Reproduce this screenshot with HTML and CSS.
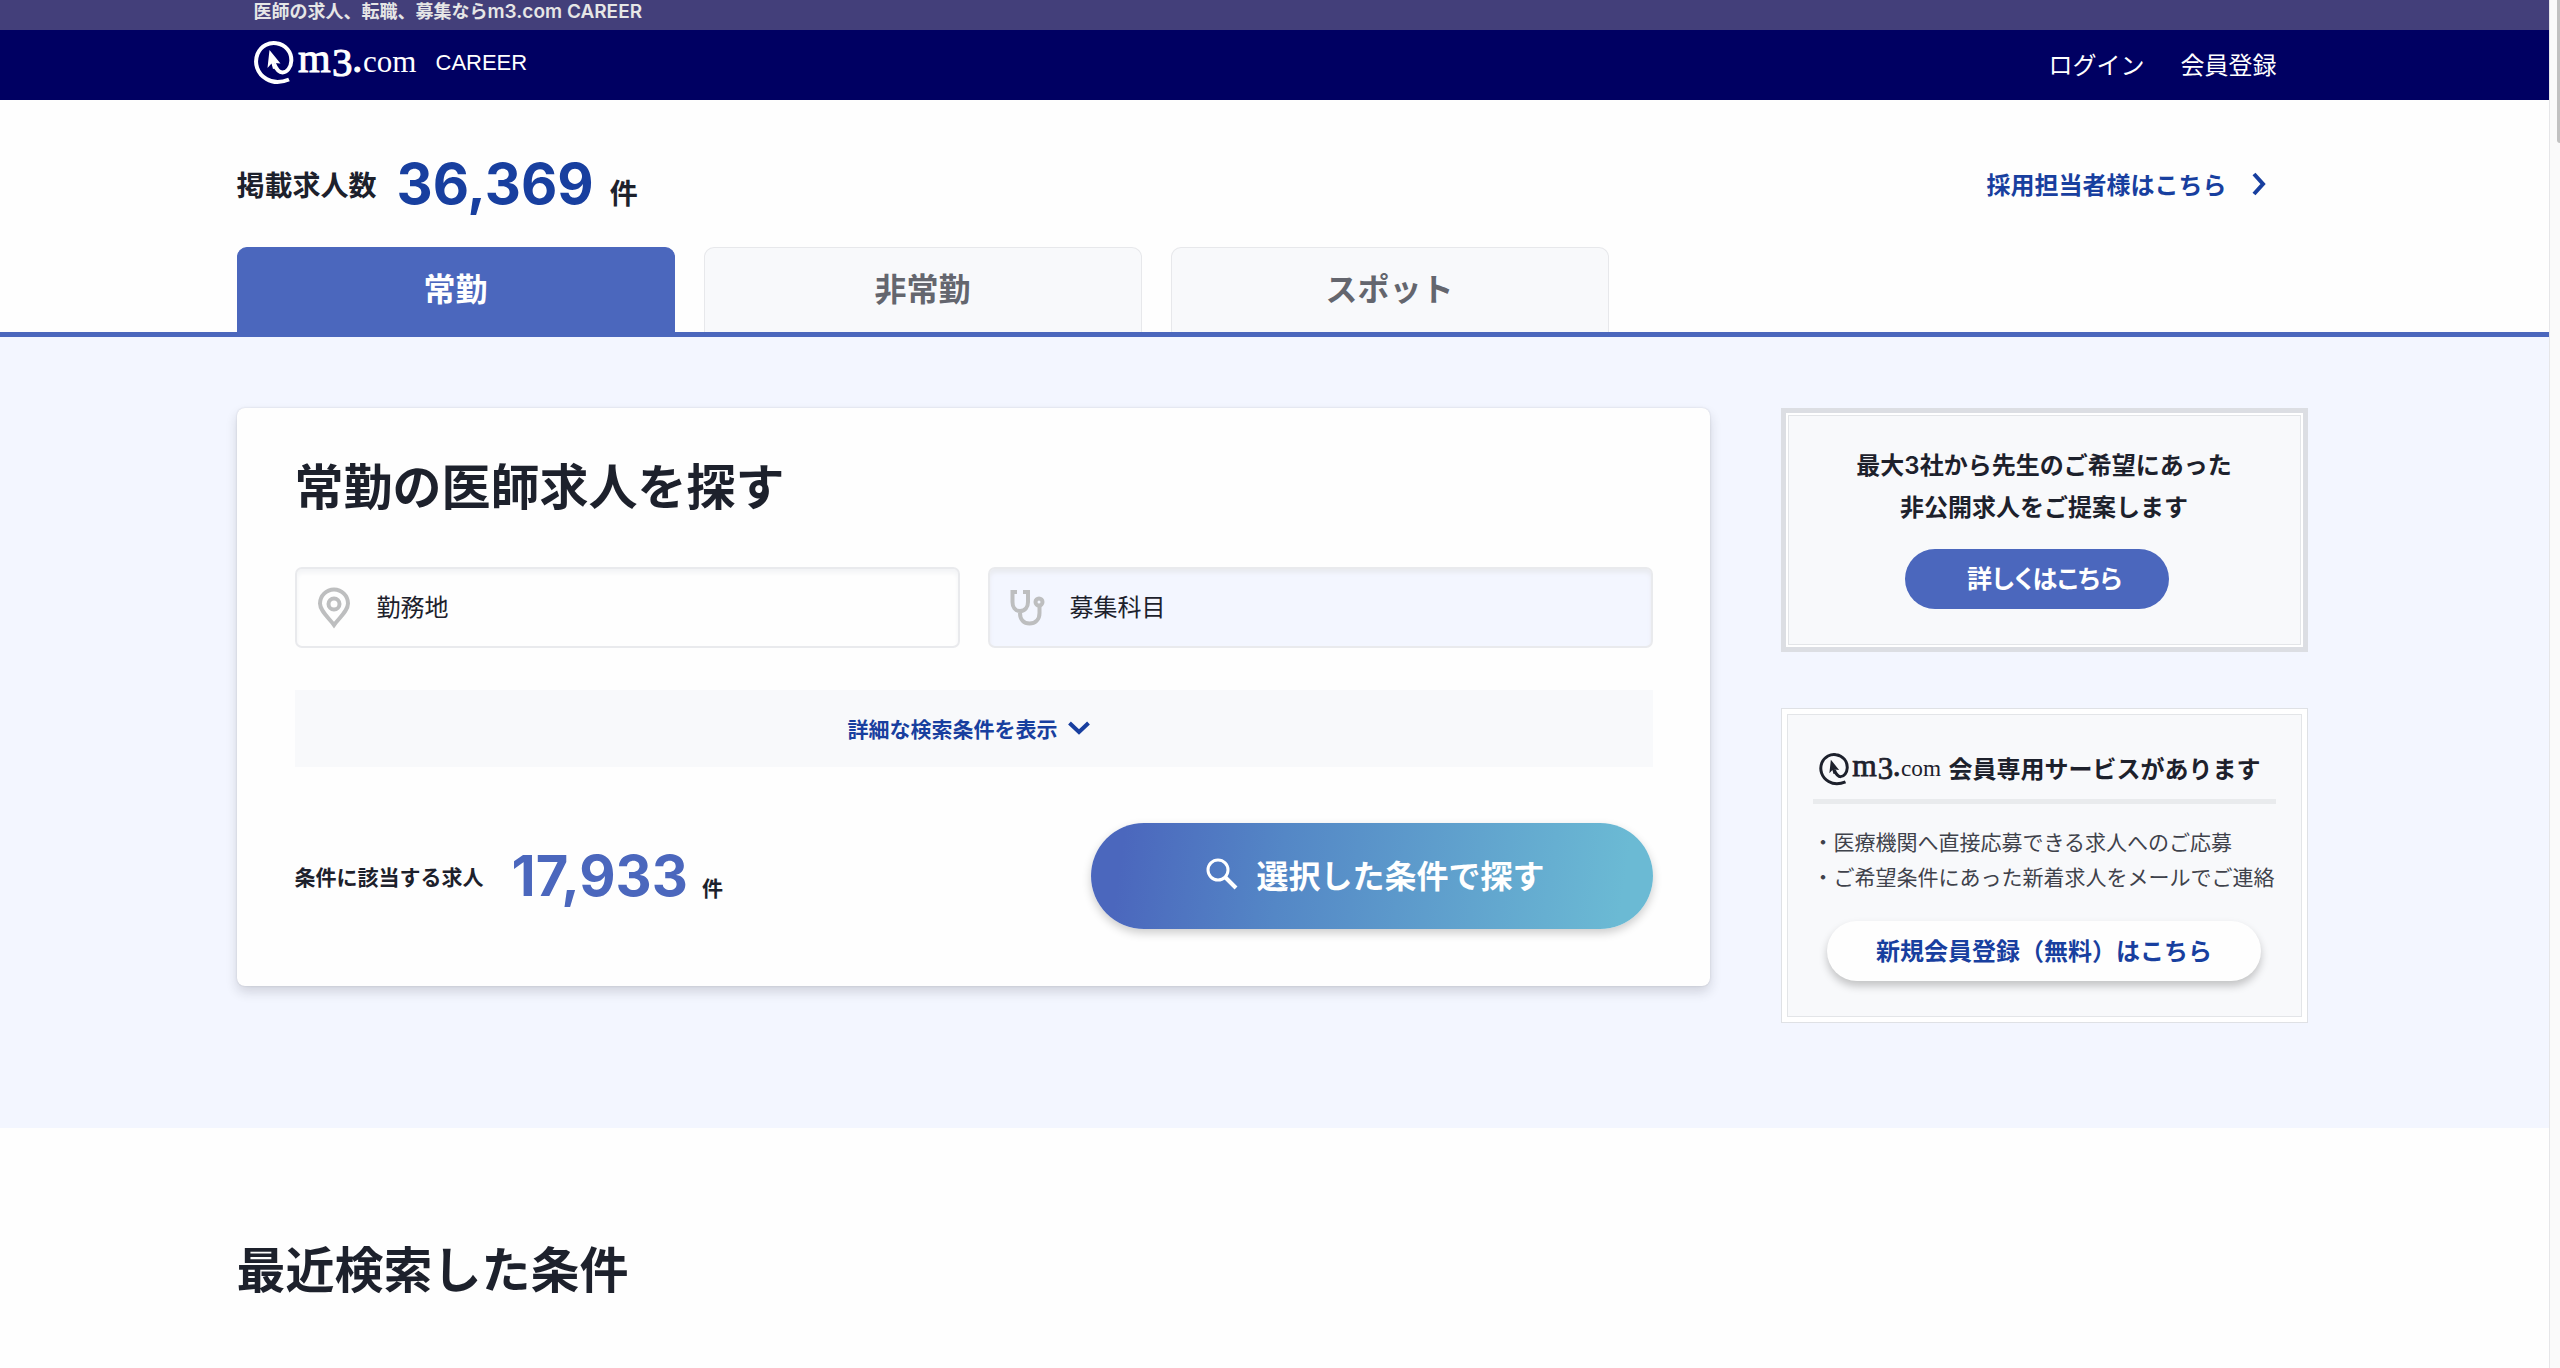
FILE: index.html
```html
<!DOCTYPE html>
<html lang="ja">
<head>
<meta charset="utf-8">
<meta name="viewport" content="width=device-width, initial-scale=1">
<title>医師の求人、転職、募集ならm3.com CAREER</title>
<link rel="stylesheet" href="styles.css">
</head>
<body>
<div class="window">
  <div class="page">
    <div class="tagline"><p class="bar">医師の求人、転職、募集なら<span class="latin">m3.com CAREER</span></p></div>
    <header class="header">
      <div class="bar header-row">
        <a href="#" class="brand" aria-label="m3.com CAREER">
          <svg class="logo" viewBox="0 0 162 44">
            <path d="M35 38.500C29 41 20 42.500 12.500 38C3 32.500 0 22 3.500 13C7 4.500 15.500 1 22.500 2.200C31.500 3.500 37.800 11 37.300 20C37 26.500 33 31.300 28.500 31.500C24.500 31.500 22 27.500 20 22.500" fill="none" stroke="currentColor" stroke-width="4"/>
            <path d="M15.500 9L26.500 22.500L20.500 22L22.500 27L19 28L17.500 22.500L13.500 27Z" fill="currentColor"/>
            <text x="44" y="31" class="logo-m">m</text>
            <text x="78" y="35" class="logo-3">3</text>
            <text x="98" y="31" class="logo-m">.</text>
            <text x="109" y="31" class="logo-com">com</text>
          </svg>
          <span>CAREER</span>
        </a>
        <nav class="nav">
          <a href="#">ログイン</a>
          <a href="#">会員登録</a>
        </nav>
      </div>
    </header>

    <main>
      <div class="container summary">
        <p class="count"><span class="count-label">掲載求人数</span><strong>36,369</strong><span>件</span></p>
        <a href="#" class="recruiter">採用担当者様はこちら
          <svg width="15" height="22" viewBox="0 0 15 22"><path d="M3 1l9 10-9 10" fill="none" stroke="currentColor" stroke-width="4"/></svg>
        </a>
      </div>
      <div class="tabs-line">
        <nav class="container tabs">
          <a href="#" class="tab active" aria-current="page">常勤</a>
          <a href="#" class="tab">非常勤</a>
          <a href="#" class="tab">スポット</a>
        </nav>
      </div>

      <section class="search">
        <div class="container columns">
          <form class="card">
            <h1 class="title">常勤の医師求人を探す</h1>
            <div class="fields">
              <label class="field">
                <svg width="34" height="42" viewBox="0 0 34 42" fill="none" stroke="currentColor" stroke-width="4"><path d="M17 38C12 31 3 24 3 16.500a14 14 0 0 1 28 0C31 24 22 31 17 38Z"/><circle cx="17" cy="17" r="5.500"/></svg>
                <input type="text" placeholder="勤務地" aria-label="勤務地" readonly>
              </label>
              <label class="field hover">
                <svg width="34" height="36" viewBox="0 0 34 36" fill="none" stroke="currentColor" stroke-width="4"><path d="M7 2H2.500V12C2.500 17 5 21 10 21S18 17 18 12V2H13M10 21V23C10 30 14 33.500 19.500 33.500S29.500 30 29.500 23V16"/><circle cx="29" cy="12" r="3.500"/></svg>
                <input type="text" placeholder="募集科目" aria-label="募集科目" readonly>
              </label>
            </div>
            <button type="button" class="more">詳細な検索条件を表示
              <svg width="22" height="14" viewBox="0 0 22 14"><path d="M1.500 2L11 11 20.500 2" fill="none" stroke="currentColor" stroke-width="4"/></svg>
            </button>
            <div class="result">
              <p class="count hits"><span class="count-label">条件に該当する求人</span><strong>17,933</strong><span>件</span></p>
              <button type="submit" class="submit">
                <svg width="32" height="32" viewBox="0 0 32 32" fill="none" stroke="currentColor"><circle cx="12" cy="12" r="10" stroke-width="3"/><path d="M19 19L30 30" stroke-width="4"/></svg>
                選択した条件で探す
              </button>
            </div>
          </form>

          <aside class="side">
            <section class="panel proposal">
              <div class="panel-inner">
                <p class="lead">最大3社から先生のご希望にあった<br>非公開求人をご提案します</p>
                <button type="button" class="pill detail">詳しくはこちら</button>
              </div>
            </section>
            <section class="panel member">
              <div class="panel-inner">
                <h2 class="member-title">
                  <svg class="logo" viewBox="0 0 162 44" role="img" aria-label="m3.com">
                    <path d="M35 38.500C29 41 20 42.500 12.500 38C3 32.500 0 22 3.500 13C7 4.500 15.500 1 22.500 2.200C31.500 3.500 37.800 11 37.300 20C37 26.500 33 31.300 28.500 31.500C24.500 31.500 22 27.500 20 22.500" fill="none" stroke="currentColor" stroke-width="4"/>
                    <path d="M15.500 9L26.500 22.500L20.500 22L22.500 27L19 28L17.500 22.500L13.500 27Z" fill="currentColor"/>
                    <text x="44" y="31" class="logo-m">m</text>
                    <text x="78" y="35" class="logo-3">3</text>
                    <text x="98" y="31" class="logo-m">.</text>
                    <text x="109" y="31" class="logo-com">com</text>
                  </svg>
                  会員専用サービスがあります
                </h2>
                <ul class="services">
                  <li>・医療機関へ直接応募できる求人へのご応募</li>
                  <li>・ご希望条件にあった新着求人をメールでご連絡</li>
                </ul>
                <button type="button" class="pill join">新規会員登録（無料）はこちら</button>
              </div>
            </section>
          </aside>
        </div>
      </section>

      <section class="container recent">
        <h2 class="title">最近検索した条件</h2>
      </section>
    </main>
  </div>
  <div class="scrollbar" aria-hidden="true"><div class="thumb"></div></div>
</div>
</body>
</html>
```
FILE: styles.css
```css
* {
  box-sizing: border-box;
  margin: 0;
  padding: 0;
}

body {
  background: #fefefe;
  color: #1d212c;
  font-family: Inter, "Noto Sans CJK JP", sans-serif;
  font-size: 24px;
}

a {
  color: inherit;
  text-decoration: none;
}

button,
input {
  border: 0;
  background: none;
  color: inherit;
  font: inherit;
}

button {
  cursor: pointer;
}

svg {
  flex: none;
  display: block;
  overflow: visible;
}

.window {
  display: flex;
  min-height: 100vh;
}

.page {
  flex: 1;
  min-width: 0;
}

.scrollbar {
  width: 11px;
  background: #fafafa;
  border-left: 1px solid #e6e6e8;
}

.thumb {
  height: 143px;
  margin-left: 7px;
  background: #c1c1c1;
  border-radius: 0 0 0 4px;
}

.container {
  max-width: 2076px;
  margin: 0 auto;
  padding-right: 5px;
}

.bar {
  max-width: 2042px;
  margin: 0 auto;
  padding-right: 19px;
}

.tagline {
  height: 30px;
  background: #433f7a;
  color: #e6e6e6;
  font-size: 18px;
  font-weight: 600;
  line-height: 23px;
}

.latin {
  font-size: 19px;
}

.header {
  background: #000062;
  color: #fff;
}

.header-row {
  display: flex;
  justify-content: space-between;
  align-items: center;
  height: 70px;
  padding-bottom: 4px;
}

.brand {
  display: flex;
  align-items: center;
  gap: 20px;
  font-family: "Liberation Sans", sans-serif;
  font-size: 22px;
}

.logo {
  width: 162px;
  height: 44px;
}

.logo-m,
.logo-3,
.logo-com {
  font-family: "Liberation Serif", serif;
  font-weight: 400;
  fill: currentColor;
  stroke: currentColor;
  stroke-width: 1px;
}

.logo-m { font-size: 42px; }
.logo-3 { font-size: 41px; }
.logo-com { font-size: 31px; stroke-width: 0; }

.nav {
  display: flex;
  gap: 36px;
}

.summary {
  display: flex;
  justify-content: space-between;
  align-items: center;
  height: 147px;
  padding-top: 20px;
}

.count {
  display: flex;
  align-items: baseline;
  font-size: 28px;
  font-weight: 600;
}

.count-label {
  align-self: center;
}

.count strong {
  margin: 0 16px 0 20px;
  color: #183f9f;
  font-size: 56px;
  font-weight: 700;
  line-height: 70px;
}

.recruiter {
  display: flex;
  align-items: center;
  gap: 24px;
  margin-right: 42px;
  color: #183f9f;
  font-weight: 700;
}

.tabs-line {
  border-bottom: 5px solid #4b67bd;
}

.tabs {
  display: flex;
  gap: 29px;
}

.tab {
  width: 438px;
  height: 85px;
  border: 1px solid #e7e8eb;
  border-bottom: 0;
  border-radius: 10px 10px 0 0;
  background: #f8f9fb;
  color: #64666e;
  font-size: 32px;
  font-weight: 700;
  line-height: 84px;
  text-align: center;
}

.tab.active {
  border-color: #4b67bd;
  background: #4b67bd;
  color: #fff;
}

.search {
  padding: 71px 0 105px;
  background: #f3f6ff;
}

.columns {
  display: grid;
  grid-template-columns: minmax(0, 1fr) 527px;
  align-items: start;
  gap: 71px;
}

.card {
  padding: 50px 57px 57px 58px;
  border-radius: 8px;
  background: #fefefe;
  box-shadow: 0 6px 12px rgba(29, 33, 44, 0.16), 0 0 2px rgba(29, 33, 44, 0.16);
}

.title {
  font-size: 49px;
  font-weight: 700;
  line-height: 60px;
}

.fields {
  display: grid;
  grid-template-columns: 1fr 1fr;
  gap: 28px;
  margin-top: 49px;
}

.field {
  display: flex;
  align-items: center;
  gap: 26px;
  height: 81px;
  padding: 0 20px;
  border: 2px solid #e9eaed;
  border-radius: 7px;
  box-shadow: inset 0 4px 4px #f3f4f6;
  color: #bdbebf;
}

.field.hover {
  background: #f3f6ff;
  box-shadow: inset 0 4px 4px #e9ebf1;
}

.field input {
  flex: 1;
  min-width: 0;
  height: 40px;
  outline: 0;
}

.field input::placeholder {
  color: #1d212c;
  opacity: 1;
}

.more {
  display: flex;
  justify-content: center;
  align-items: center;
  gap: 10px;
  width: 100%;
  height: 77px;
  margin-top: 42px;
  padding: 0 10px 2px 0;
  background: #f8f9fb;
  color: #183f9f;
  font-size: 21px;
  font-weight: 700;
}

.result {
  display: flex;
  justify-content: space-between;
  align-items: center;
  margin-top: 56px;
}

.hits {
  font-size: 21px;
}

.hits strong {
  margin: 0 14px 0 28px;
  color: #4b67bd;
}

.submit {
  display: flex;
  justify-content: center;
  align-items: center;
  gap: 18px;
  width: 562px;
  height: 106px;
  padding: 0 0 4px 8px;
  border-radius: 53px;
  background: linear-gradient(98deg, #4b67bd 6%, #5487c6 34%, #6bbad4 94%);
  box-shadow: 0 4px 10px rgba(0, 0, 0, 0.2);
  color: #fff;
  font-size: 32px;
  font-weight: 700;
}

.side {
  display: grid;
  gap: 56px;
}

.panel {
  background: #fff;
}

.proposal {
  padding: 2px;
  border: 5px solid #dcdee3;
}

.member {
  padding: 5px;
  border: 1px solid #dfe1e5;
}

.panel-inner {
  display: flex;
  flex-direction: column;
  align-items: center;
  border: 1px solid #e3e5e8;
  background: #f8f9fb;
}

.proposal .panel-inner {
  padding: 29px 0 35px;
}

.member .panel-inner {
  padding: 38px 25px 35px;
}

.lead {
  font-weight: 600;
  line-height: 42px;
  text-align: center;
}

.pill {
  height: 60px;
  padding-bottom: 4px;
  border-radius: 30px;
}

.detail {
  width: 264px;
  margin: 20px 15px 0 0;
  padding-left: 16px;
  background: #4b67bd;
  color: #fff;
  font-size: 25px;
  font-weight: 600;
  font-feature-settings: "palt";
}

.member-title {
  display: flex;
  align-items: center;
  gap: 8px;
  width: 100%;
  padding: 0 0 13px 6px;
  border-bottom: 5px solid #e9ebed;
  font-size: 24px;
  font-weight: 600;
  line-height: 32px;
  white-space: nowrap;
}

.member-title .logo {
  width: 122px;
  height: 33px;
}

.services {
  width: 100%;
  margin-top: 21px;
  color: #3f424b;
  font-size: 21px;
  line-height: 35px;
  list-style: none;
  white-space: nowrap;
}

.join {
  width: 434px;
  margin-top: 26px;
  background: #fefefe;
  box-shadow: 0 5px 9px rgba(0, 0, 0, 0.22);
  color: #183f9f;
  font-weight: 700;
}

.recent {
  padding-top: 113px;
}
```
